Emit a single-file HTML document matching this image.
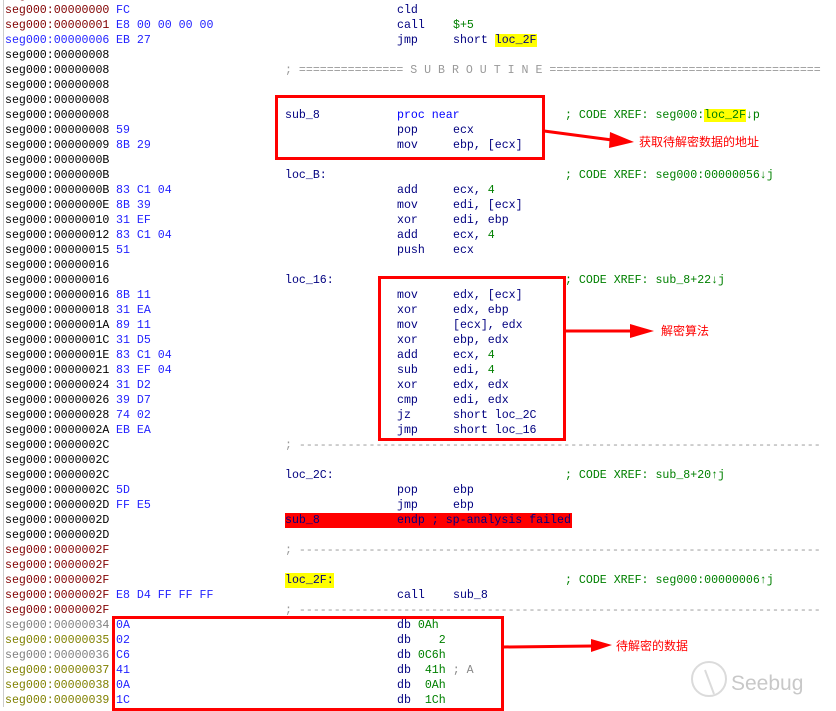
<!DOCTYPE html>
<html><head><meta charset="utf-8"><style>
body{margin:0;width:836px;height:707px;background:#fff;overflow:hidden;position:relative;font-family:"Liberation Mono",monospace;font-size:11.6px}
.r{position:absolute;left:0;height:15px;line-height:15px;width:836px;white-space:pre}
.r span{position:absolute;top:0}
.a{left:5px;color:#000}
.b{left:116px;color:#2323ff}
.l{left:285px;color:#000080}
.m{left:397px;color:#000080}
.o{left:453px;color:#000080}
.c{left:565px;color:#008000}
.g{color:#008000}
.s{left:285px;color:#999}
.y{background:#ffff00}
.box{position:absolute;border:3px solid #f00;box-sizing:border-box}
.cn{position:absolute;color:#f00;font-family:"Liberation Sans","Noto Sans CJK SC",sans-serif;font-size:12px}
</style></head><body>
<div style="position:absolute;left:3px;top:0;width:1px;height:707px;background:#ccc"></div>
<div style="position:absolute;left:285px;top:513px;width:287px;height:15px;background:#f00"></div>
<div class="r" style="top:-12px"><span class="a" style="color:#800000">seg000:</span></div>
<div class="r" style="top:3px"><span class="a" style="color:#800000">seg000:00000000</span><span class="b">FC</span><span class="m">cld</span></div>
<div class="r" style="top:18px"><span class="a" style="color:#800000">seg000:00000001</span><span class="b">E8 00 00 00 00</span><span class="m">call</span><span class="o g">$+5</span></div>
<div class="r" style="top:33px"><span class="a" style="color:#2323ff">seg000:00000006</span><span class="b">EB 27</span><span class="m">jmp</span><span class="o">short <span class="y" style="position:static">loc_2F</span></span></div>
<div class="r" style="top:48px"><span class="a">seg000:00000008</span></div>
<div class="r" style="top:63px"><span class="a">seg000:00000008</span><span class="s">; =============== S U B R O U T I N E =======================================</span></div>
<div class="r" style="top:78px"><span class="a">seg000:00000008</span></div>
<div class="r" style="top:93px"><span class="a">seg000:00000008</span></div>
<div class="r" style="top:108px"><span class="a">seg000:00000008</span><span class="l">sub_8</span><span class="m" style="color:#0000ff">proc near</span><span class="c">; CODE XREF: seg000:<span class="y" style="position:static">loc_2F</span>↓p</span></div>
<div class="r" style="top:123px"><span class="a">seg000:00000008</span><span class="b">59</span><span class="m">pop</span><span class="o">ecx</span></div>
<div class="r" style="top:138px"><span class="a">seg000:00000009</span><span class="b">8B 29</span><span class="m">mov</span><span class="o">ebp, [ecx]</span></div>
<div class="r" style="top:153px"><span class="a">seg000:0000000B</span></div>
<div class="r" style="top:168px"><span class="a">seg000:0000000B</span><span class="l">loc_B:</span><span class="c">; CODE XREF: seg000:00000056↓j</span></div>
<div class="r" style="top:183px"><span class="a">seg000:0000000B</span><span class="b">83 C1 04</span><span class="m">add</span><span class="o">ecx, <span class="g" style="position:static">4</span></span></div>
<div class="r" style="top:198px"><span class="a">seg000:0000000E</span><span class="b">8B 39</span><span class="m">mov</span><span class="o">edi, [ecx]</span></div>
<div class="r" style="top:213px"><span class="a">seg000:00000010</span><span class="b">31 EF</span><span class="m">xor</span><span class="o">edi, ebp</span></div>
<div class="r" style="top:228px"><span class="a">seg000:00000012</span><span class="b">83 C1 04</span><span class="m">add</span><span class="o">ecx, <span class="g" style="position:static">4</span></span></div>
<div class="r" style="top:243px"><span class="a">seg000:00000015</span><span class="b">51</span><span class="m">push</span><span class="o">ecx</span></div>
<div class="r" style="top:258px"><span class="a">seg000:00000016</span></div>
<div class="r" style="top:273px"><span class="a">seg000:00000016</span><span class="l">loc_16:</span><span class="c">; CODE XREF: sub_8+22↓j</span></div>
<div class="r" style="top:288px"><span class="a">seg000:00000016</span><span class="b">8B 11</span><span class="m">mov</span><span class="o">edx, [ecx]</span></div>
<div class="r" style="top:303px"><span class="a">seg000:00000018</span><span class="b">31 EA</span><span class="m">xor</span><span class="o">edx, ebp</span></div>
<div class="r" style="top:318px"><span class="a">seg000:0000001A</span><span class="b">89 11</span><span class="m">mov</span><span class="o">[ecx], edx</span></div>
<div class="r" style="top:333px"><span class="a">seg000:0000001C</span><span class="b">31 D5</span><span class="m">xor</span><span class="o">ebp, edx</span></div>
<div class="r" style="top:348px"><span class="a">seg000:0000001E</span><span class="b">83 C1 04</span><span class="m">add</span><span class="o">ecx, <span class="g" style="position:static">4</span></span></div>
<div class="r" style="top:363px"><span class="a">seg000:00000021</span><span class="b">83 EF 04</span><span class="m">sub</span><span class="o">edi, <span class="g" style="position:static">4</span></span></div>
<div class="r" style="top:378px"><span class="a">seg000:00000024</span><span class="b">31 D2</span><span class="m">xor</span><span class="o">edx, edx</span></div>
<div class="r" style="top:393px"><span class="a">seg000:00000026</span><span class="b">39 D7</span><span class="m">cmp</span><span class="o">edi, edx</span></div>
<div class="r" style="top:408px"><span class="a">seg000:00000028</span><span class="b">74 02</span><span class="m">jz</span><span class="o">short loc_2C</span></div>
<div class="r" style="top:423px"><span class="a">seg000:0000002A</span><span class="b">EB EA</span><span class="m">jmp</span><span class="o">short loc_16</span></div>
<div class="r" style="top:438px"><span class="a">seg000:0000002C</span><span class="s">; ---------------------------------------------------------------------------</span></div>
<div class="r" style="top:453px"><span class="a">seg000:0000002C</span></div>
<div class="r" style="top:468px"><span class="a">seg000:0000002C</span><span class="l">loc_2C:</span><span class="c">; CODE XREF: sub_8+20↑j</span></div>
<div class="r" style="top:483px"><span class="a">seg000:0000002C</span><span class="b">5D</span><span class="m">pop</span><span class="o">ebp</span></div>
<div class="r" style="top:498px"><span class="a">seg000:0000002D</span><span class="b">FF E5</span><span class="m">jmp</span><span class="o">ebp</span></div>
<div class="r" style="top:513px"><span class="a">seg000:0000002D</span><span class="l">sub_8</span><span class="m">endp ; sp-analysis failed</span></div>
<div class="r" style="top:528px"><span class="a">seg000:0000002D</span></div>
<div class="r" style="top:543px"><span class="a" style="color:#800000">seg000:0000002F</span><span class="s">; ---------------------------------------------------------------------------</span></div>
<div class="r" style="top:558px"><span class="a" style="color:#800000">seg000:0000002F</span></div>
<div class="r" style="top:573px"><span class="a" style="color:#800000">seg000:0000002F</span><span class="l y">loc_2F:</span><span class="c">; CODE XREF: seg000:00000006↑j</span></div>
<div class="r" style="top:588px"><span class="a" style="color:#800000">seg000:0000002F</span><span class="b">E8 D4 FF FF FF</span><span class="m">call</span><span class="o">sub_8</span></div>
<div class="r" style="top:603px"><span class="a" style="color:#800000">seg000:0000002F</span><span class="s">; ---------------------------------------------------------------------------</span></div>
<div class="r" style="top:618px"><span class="a" style="color:#808080">seg000:00000034</span><span class="b">0A</span><span class="m">db <span class="g" style="position:static">0Ah</span></span></div>
<div class="r" style="top:633px"><span class="a" style="color:#808000">seg000:00000035</span><span class="b">02</span><span class="m">db    <span class="g" style="position:static">2</span></span></div>
<div class="r" style="top:648px"><span class="a" style="color:#808080">seg000:00000036</span><span class="b">C6</span><span class="m">db <span class="g" style="position:static">0C6h</span></span></div>
<div class="r" style="top:663px"><span class="a" style="color:#808000">seg000:00000037</span><span class="b">41</span><span class="m">db  <span class="g" style="position:static">41h</span> <span style="position:static;color:#888">; A</span></span></div>
<div class="r" style="top:678px"><span class="a" style="color:#808000">seg000:00000038</span><span class="b">0A</span><span class="m">db  <span class="g" style="position:static">0Ah</span></span></div>
<div class="r" style="top:693px"><span class="a" style="color:#808000">seg000:00000039</span><span class="b">1C</span><span class="m">db  <span class="g" style="position:static">1Ch</span></span></div>

<div class="box" style="left:275px;top:95px;width:270px;height:65px"></div>
<div class="box" style="left:378px;top:276px;width:188px;height:165px"></div>
<div class="box" style="left:112px;top:616px;width:392px;height:95px"></div>
<svg style="position:absolute;left:0;top:0" width="836" height="707">
<line x1="544" y1="131" x2="612" y2="140" stroke="#f00" stroke-width="3"/>
<polygon points="610,132 634,142 609,148" fill="#f00"/>
<line x1="565" y1="331" x2="632" y2="331" stroke="#f00" stroke-width="3"/>
<polygon points="630,324 654,331 630,338" fill="#f00"/>
<line x1="503" y1="647" x2="593" y2="646" stroke="#f00" stroke-width="3"/>
<polygon points="591,639 612,645 591,652" fill="#f00"/>
<g opacity="0.35" fill="none" stroke="#999" stroke-width="2">
<circle cx="709" cy="679" r="17"/>
<line x1="705" y1="670" x2="714" y2="694"/>
</g>
<text x="731" y="690" font-family="Liberation Sans,sans-serif" font-size="21" fill="#bbb" opacity="0.8">Seebug</text>
</svg>
<div class="cn" style="left:639px;top:133px">获取待解密数据的地址</div>
<div class="cn" style="left:661px;top:322px">解密算法</div>
<div class="cn" style="left:616px;top:637px">待解密的数据</div>
</body></html>
